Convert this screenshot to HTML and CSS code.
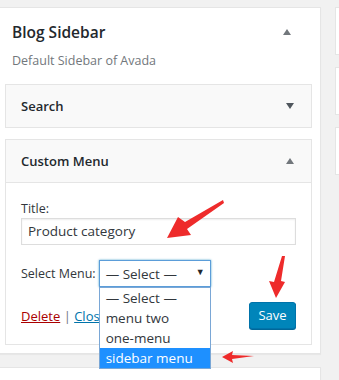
FILE: index.html
```html
<!DOCTYPE html>
<html lang="en">
<head>
    <meta charset="UTF-8">
    <title>Widgets</title>
    <link rel="stylesheet" href="styles.css">
</head>
<body>
<div class="screen">
    <div class="main-col">
        <div class="sidebar">
            <div class="sidebar-head">
                <h2>Blog Sidebar</h2>
                <span class="tri tri-up"></span>
            </div>
            <p class="desc">Default Sidebar of Avada</p>

            <div class="widget">
                <div class="widget-top">
                    <h3>Search</h3>
                    <span class="tri tri-down"></span>
                </div>
            </div>

            <div class="widget">
                <div class="widget-top open">
                    <h3>Custom Menu</h3>
                    <span class="tri tri-up"></span>
                </div>
                <div class="widget-inside">
                    <label class="label">Title:</label>
                    <div class="input">Product category</div>
                    <div class="row">
                        <span class="label">Select Menu:</span>
                        <div class="select">
                            <span>— Select —</span>
                            <span class="caret">▼</span>
                            <ul class="options">
                                <li>— Select —</li>
                                <li>menu two</li>
                                <li>one-menu</li>
                                <li class="active">sidebar menu</li>
                            </ul>
                        </div>
                    </div>
                    <div class="actions">
                        <div class="links">
                            <a class="delete">Delete</a> | <a class="close">Close</a>
                        </div>
                        <div class="button">Save</div>
                    </div>
                </div>
            </div>
        </div>
        <div class="sidebar next"></div>
    </div>
    <div class="side-col">
        <div class="stub"></div>
        <div class="stub"></div>
        <div class="stub"></div>
    </div>
</div>

<svg class="arrows" width="339" height="380" viewBox="0 0 339 380">
    <polygon points="223,200 185,222 178,217 167,238 191,235 187,229 224,203" />
    <polygon points="285,256 281,281 285,282 276,298 269,281 274,282 282,256" />
    <polygon points="222,357 233,351 232,355 254,356 232,359 233,363" />
</svg>
</body>
</html>
```
FILE: styles.css
```css
*{margin: 0; padding: 0; box-sizing: border-box}
html, body {
    width: 100%;
    height: 100%;
    background: #f1f1f1;
    overflow: hidden;
}
body {
    font-family: "Open Sans", "Noto Sans", sans-serif;
    color: #23282d;
    position: relative;
}
.screen {
    display: flex;
    gap: 14px;
    height: 380px;
    overflow: hidden;
}
/* Left column with the sidebar panel */
.main-col {
    width: 321px;
    flex-shrink: 0;
    padding-top: 7px;
}
.sidebar {
    background: #fff;
    border: 1px solid #e5e5e5;
    border-left: 0;
    box-shadow: 0 1px 1px rgba(0,0,0,.04);
    padding: 0 8px 7px 5px;
    height: 347px;
}
.sidebar.next {
    margin-top: 13px;
    height: 13px;
    border-bottom: 0;
}
.sidebar-head {
    display: flex;
    justify-content: space-between;
    align-items: center;
    padding: 14px 21px 0 7px;
}
.sidebar-head h2 {
    font-size: 15.5px;
    font-weight: 600;
    line-height: 20px;
}
.desc {
    padding-left: 7px;
    margin-top: 10px;
    font-size: 12.5px;
    line-height: 18px;
    color: #72777c;
}
/* Triangles */
.tri {
    width: 0;
    height: 0;
    border-left: 4px solid transparent;
    border-right: 4px solid transparent;
}
.tri-up {
    border-bottom: 6px solid #72777c;
}
.tri-down {
    border-top: 6px solid #50575e;
}
/* Widgets */
.widget {
    border: 1px solid #e5e5e5;
    margin-top: 11px;
    background: #fff;
}
.sidebar-head + .desc + .widget {
    margin-top: 14px;
}
.widget-top {
    height: 42px;
    background: #f9f9f9;
    display: flex;
    justify-content: space-between;
    align-items: center;
    padding: 0 17px 0 15px;
}
.widget-top.open {
    height: 43px;
    border-bottom: 1px solid #e5e5e5;
}
.widget-top h3 {
    font-size: 13px;
    font-weight: 600;
}
.widget-inside {
    padding: 17px 15px 15px 15px;
    font-size: 12.5px;
}
.label {
    display: block;
    line-height: 18px;
    color: #32373c;
    font-size: 12.5px;
}
.input {
    height: 27px;
    border: 1px solid #ddd;
    box-shadow: inset 0 1px 2px rgba(0,0,0,.07);
    padding: 0 6px;
    font-size: 13.5px;
    line-height: 25px;
    color: #32373c;
}
.row {
    display: flex;
    align-items: center;
    gap: 3px;
    margin-top: 15px;
}
.select {
    position: relative;
    width: 112px;
    height: 27px;
    border: 1px solid #5b9dd9;
    box-shadow: 0 0 2px rgba(30,140,190,.8);
    display: flex;
    justify-content: space-between;
    align-items: center;
    padding: 0 5px 0 6px;
    font-size: 13.5px;
    color: #32373c;
}
.caret {
    font-size: 9px;
    color: #23282d;
    margin-top: -4px;
}
.options {
    position: absolute;
    top: 26px;
    left: -1px;
    width: 112px;
    background: #fff;
    border: 1px solid #7aa7d6;
    list-style: none;
    z-index: 5;
}
.options li {
    height: 20px;
    line-height: 20px;
    padding-left: 6px;
    font-size: 13.5px;
    color: #32373c;
}
.options li.active {
    background: #1e90ff;
    color: #fff;
}
.actions {
    display: flex;
    justify-content: space-between;
    align-items: center;
    margin-top: 15px;
}
.links {
    color: #72777c;
    font-size: 13px;
}
.delete {
    color: #a00;
    text-decoration: underline;
}
.close {
    color: #0073aa;
    text-decoration: underline;
}
.button {
    width: 47px;
    height: 27px;
    line-height: 25px;
    text-align: center;
    background: #0085ba;
    border: 1px solid #0073aa;
    border-radius: 3px;
    box-shadow: 0 1px 0 #006799;
    color: #fff;
    font-size: 13px;
}
/* Right column */
.side-col {
    padding-top: 7px;
}
.stub {
    width: 4px;
    height: 48px;
    background: #fff;
    border: 1px solid #e5e5e5;
    border-right: 0;
    margin-bottom: 12px;
}
.stub + .stub + .stub {
    margin-top: 1px;
}
/* Red hint arrows */
.arrows {
    position: absolute;
    top: 0;
    left: 0;
    z-index: 10;
}
.arrows polygon {
    fill: #ee2b2b;
}
```
